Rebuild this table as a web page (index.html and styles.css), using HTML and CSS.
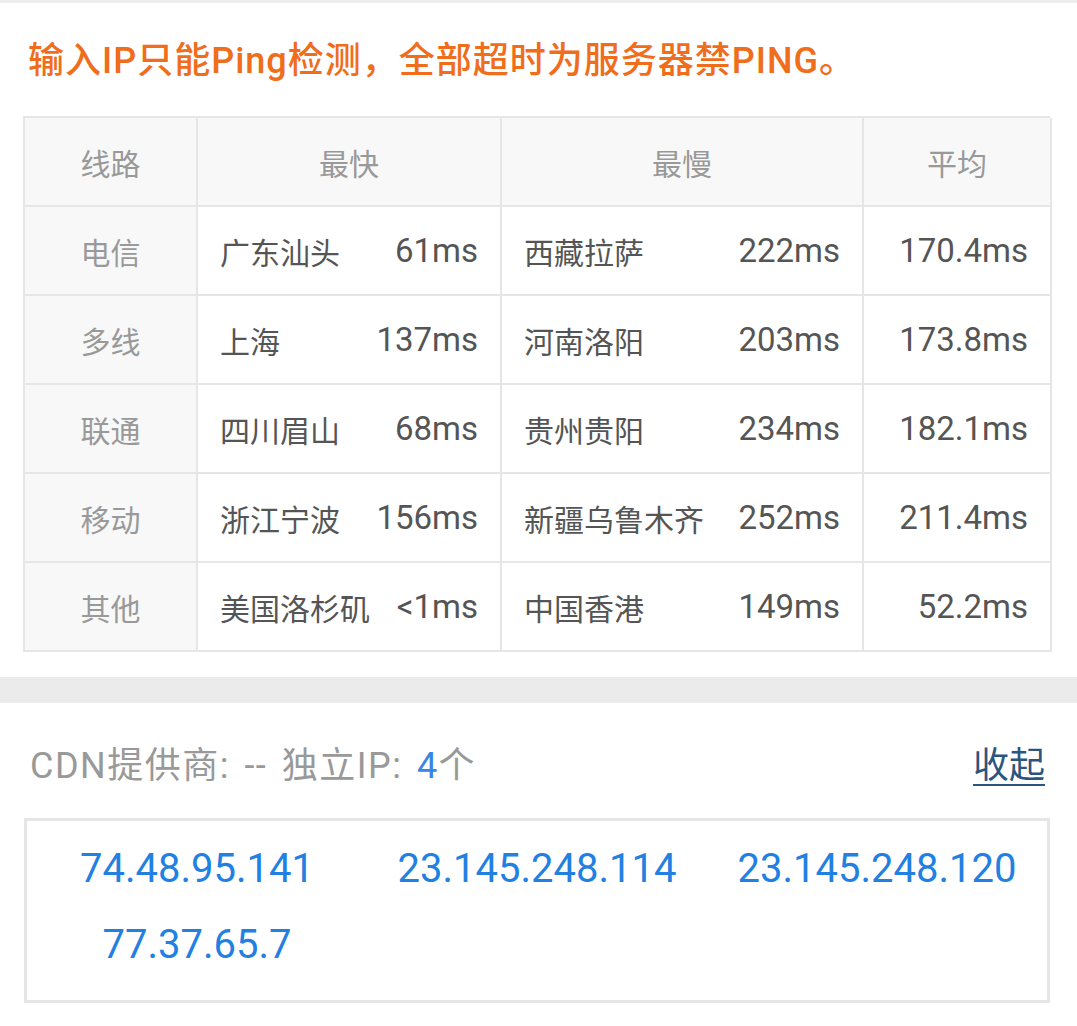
FILE: index.html
```html
<!DOCTYPE html>
<html lang="zh-CN">
<head>
<meta charset="utf-8">
<title>Ping检测</title>
<link rel="stylesheet" href="styles.css">
</head>
<body>
<div class="top-line"></div>
<p class="notice">输入IP只能Ping检测，全部超时为服务器禁PING。</p>
<div class="ping-table">
  <div class="cell head line">线路</div>
  <div class="cell head center">最快</div>
  <div class="cell head center">最慢</div>
  <div class="cell head center">平均</div>

  <div class="cell line">电信</div>
  <div class="cell pair"><span>广东汕头</span><span class="ms">61ms</span></div>
  <div class="cell pair"><span>西藏拉萨</span><span class="ms">222ms</span></div>
  <div class="cell avg"><span class="ms">170.4ms</span></div>

  <div class="cell line">多线</div>
  <div class="cell pair"><span>上海</span><span class="ms">137ms</span></div>
  <div class="cell pair"><span>河南洛阳</span><span class="ms">203ms</span></div>
  <div class="cell avg"><span class="ms">173.8ms</span></div>

  <div class="cell line">联通</div>
  <div class="cell pair"><span>四川眉山</span><span class="ms">68ms</span></div>
  <div class="cell pair"><span>贵州贵阳</span><span class="ms">234ms</span></div>
  <div class="cell avg"><span class="ms">182.1ms</span></div>

  <div class="cell line">移动</div>
  <div class="cell pair"><span>浙江宁波</span><span class="ms">156ms</span></div>
  <div class="cell pair"><span>新疆乌鲁木齐</span><span class="ms">252ms</span></div>
  <div class="cell avg"><span class="ms">211.4ms</span></div>

  <div class="cell line">其他</div>
  <div class="cell pair"><span>美国洛杉矶</span><span class="ms">&lt;1ms</span></div>
  <div class="cell pair"><span>中国香港</span><span class="ms">149ms</span></div>
  <div class="cell avg"><span class="ms">52.2ms</span></div>
</div>
<div class="band"></div>
<div class="cdn-row">
  <div class="cdn-info">CDN提供商: -- 独立IP: <span class="count">4</span>个</div>
  <a class="collapse" href="#">收起</a>
</div>
<div class="ip-box">
  <span class="ip">74.48.95.141</span>
  <span class="ip">23.145.248.114</span>
  <span class="ip">23.145.248.120</span>
  <span class="ip">77.37.65.7</span>
</div>
</body>
</html>
```
FILE: styles.css
```css
html, body {
  margin: 0;
  padding: 0;
  background: #fff;
}
body {
  font-family: Roboto, "Noto Sans CJK SC", sans-serif;
  width: 1077px;
}
.top-line {
  height: 3px;
  background: #eeeeee;
}
.notice {
  margin: 0;
  padding: 35px 28px 0;
  font-size: 36px;
  line-height: 46px;
  font-weight: 500;
  letter-spacing: 1px;
  color: #ef6d1b;
  white-space: nowrap;
}
.ping-table {
  margin: 32px 27px 0 23px;
  display: grid;
  grid-template-columns: 173px 304px 362px 188px;
  grid-auto-rows: 89px;
  border-top: 2px solid #e6e6e6;
  border-left: 2px solid #e6e6e6;
}
.cell {
  display: flex;
  align-items: center;
  padding: 0 22px;
  border-right: 2px solid #e6e6e6;
  border-bottom: 2px solid #e6e6e6;
  font-size: 30px;
  color: #555;
  white-space: nowrap;
}
.ms {
  font-size: 33px;
}
.head {
  background: #f8f8f8;
  color: #999;
  justify-content: center;
}
.line {
  background: #f8f8f8;
  color: #999;
  justify-content: center;
}
.pair {
  justify-content: space-between;
}
.avg {
  justify-content: flex-end;
}
.band {
  height: 26px;
  margin-top: 25px;
  background: #ebebeb;
}
.cdn-row {
  height: 115px;
  display: flex;
  align-items: center;
  justify-content: space-between;
  padding: 0 32px 0 30px;
  box-sizing: border-box;
  font-size: 36px;
}
.cdn-info {
  color: #999;
  margin-top: 2px;
  letter-spacing: 1.5px;
  word-spacing: 4px;
}
.count {
  color: #3a85df;
}
.collapse {
  color: #2b5580;
  text-decoration: underline;
  text-underline-offset: 6px;
  text-decoration-thickness: 2px;
  margin-top: 2px;
}
.ip-box {
  margin: 0 27px 0 24px;
  border: 3px solid #e6e6e6;
  height: 185px;
  box-sizing: border-box;
  padding: 9px 0 18px;
  display: grid;
  grid-template-columns: repeat(3, 1fr);
  grid-auto-rows: 76px;
}
.ip {
  display: flex;
  align-items: center;
  justify-content: center;
  font-size: 40px;
  color: #2280e2;
}
```
